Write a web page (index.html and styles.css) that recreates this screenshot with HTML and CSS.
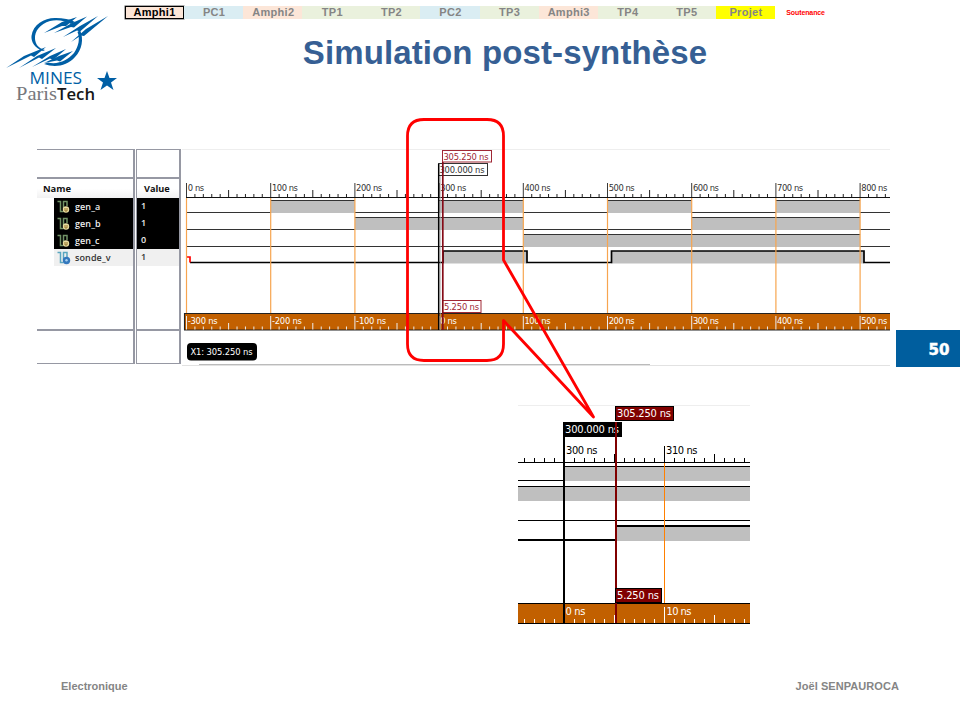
FILE: index.html
```
<!DOCTYPE html>
<html lang="fr">
<head>
<meta charset="utf-8">
<title>Simulation post-synthèse</title>
<link rel="stylesheet" href="styles.css">
</head>
<body>
<div class="slide">
<header class="header">
  <svg class="logo" width="125" height="110" viewBox="0 0 125 110">
    <g fill="#005fa5">
      <path d="M43 51C34 48 31 41 31.500 36C33 24 45 17.500 56 18C63 18 70 19 75 22L71 24C65 20.500 57 19.500 50 21C40 24 34.500 31 35 39C35.500 44 38 48 45 50Z"/>
      <path d="M80 30C84 39 82 50 75 57C67 66 55 68 44 64L48 62.500C58 65 68 60 74 53C79 46 80 38 77.500 32Z"/>
      <path d="M44 33L62 22L77 17L66 26L62 26Z"/>
      <path d="M54 33L72 23L87 16.500L74 27.500L71 27Z"/>
      <path d="M63 37L80 26L98 16L80 31.500L77 30.500Z"/>
      <path d="M71 42L86 29L108 16L84 36L81 35.500Z"/>
      <path d="M6 68L24 56L46 47L34 57L31 55.500Z"/>
      <path d="M19 68L37 56L56 48L42 59L39 57.500Z"/>
      <path d="M32 67L50 56L66 49L53 60L50 58.500Z"/>
      <path d="M44 63L59 56L73 51L60 61.500L57 60.500Z"/>
      <path d="M107 71L109.500 78L117 78L111 82.500L113.500 90L107 85.500L100.500 90L103 82.500L97 78L104.500 78Z"/>
    </g>
    <text class="logo-mines" x="29.500" y="83.500" textLength="52.500" lengthAdjust="spacingAndGlyphs">MINES</text>
    <text class="logo-paris" x="16" y="100" textLength="41" lengthAdjust="spacingAndGlyphs">Paris</text>
    <text class="logo-tech" x="57" y="100" textLength="38" lengthAdjust="spacingAndGlyphs">Tech</text>
  </svg>
  <div class="heading">
    <nav class="nav">
      <span class="tab amphi current">Amphi1</span><span class="tab pc">PC1</span><span class="tab amphi">Amphi2</span><span class="tab tp">TP1</span><span class="tab tp">TP2</span><span class="tab pc">PC2</span><span class="tab tp">TP3</span><span class="tab amphi">Amphi3</span><span class="tab tp">TP4</span><span class="tab tp">TP5</span><span class="tab projet">Projet</span><span class="tab soutenance">Soutenance</span>
    </nav>
    <h1 class="title">Simulation post-synthèse</h1>
  </div>
</header>

<main>
  <section class="simulation">
    <div class="panel names">
      <div class="blank"></div>
      <div class="head">Name</div>
      <div class="signal selected"><svg class="sig-icon" width="14" height="14"><use href="#sig"/><circle cx="9" cy="9.500" r="3.200" fill="#e8dca0"/><path d="M8 8v3h2V8" fill="none" stroke="#94742c"/></svg><span>gen_a</span></div>
      <div class="signal selected"><svg class="sig-icon" width="14" height="14"><use href="#sig"/><circle cx="9" cy="9.500" r="3.200" fill="#e8dca0"/><path d="M8 8v3h2V8" fill="none" stroke="#94742c"/></svg><span>gen_b</span></div>
      <div class="signal selected"><svg class="sig-icon" width="14" height="14"><use href="#sig"/><circle cx="9" cy="9.500" r="3.200" fill="#e8dca0"/><path d="M8 8v3h2V8" fill="none" stroke="#94742c"/></svg><span>gen_c</span></div>
      <div class="signal probe"><svg class="sig-icon" width="14" height="14"><use href="#sig"/><circle cx="9.500" cy="9.500" r="3.700" fill="#3478bd"/><circle cx="9.500" cy="9.200" r="1.200" fill="#a9d0ee"/></svg><span>sonde_v</span></div>
      <div class="rest"></div>
      <div class="bottom"></div>
    </div>
    <div class="panel values">
      <div class="blank"></div>
      <div class="head">Value</div>
      <div class="value selected">1</div>
      <div class="value selected">1</div>
      <div class="value selected">0</div>
      <div class="value">1</div>
      <div class="rest"></div>
      <div class="bottom"></div>
    </div>
    <svg class="waves" id="waves" width="708" height="218" viewBox="182 149 708 218">
      <defs><path id="sig" d="M0.500 1.500H3.500V11.500H6.500M6.500 9V1.500H10V6" fill="none" stroke="currentColor" stroke-width="1.500"/></defs>
    </svg>
    <div class="page-number">50</div>
  </section>
  <svg class="detail" id="detail" width="232" height="220" viewBox="518 405 232 220"></svg>
</main>

<footer class="footer"><span class="course">Electronique</span><span class="author">Joël SENPAUROCA</span></footer>
<svg class="callout" width="960" height="720" viewBox="0 0 960 720"><path d="M424 119.500H487Q503.500 119.500 503.500 136V260L593.500 417L503.500 320.500V344Q503.500 360.500 487 360.500H424Q407.500 360.500 407.500 344V136Q407.500 119.500 424 119.500Z"/></svg>
</div>
<script src="waves.js"></script>
</body>
</html>
```

FILE: styles.css
```
* { box-sizing: border-box; }
body { margin: 0; background: #fff; font-family: "Liberation Sans", sans-serif; }
.slide { position: relative; width: 960px; height: 720px; overflow: hidden; display: flex; flex-direction: column; }
.header { display: flex; height: 149px; flex: none; }
.logo { flex: none; }
.logo-mines { font: 17px "Open Sans", sans-serif; fill: #005fa5; }
.logo-paris { font: 18px "Liberation Serif", serif; fill: #77787c; }
.logo-tech { font: 600 17px "Open Sans", sans-serif; fill: #171717; }
.heading { flex: 1; padding-top: 6px; }
.nav { display: flex; height: 13px; }
.tab { width: 59.1px; height: 13px; font-size: 11px; line-height: 13px; font-weight: bold; letter-spacing: .3px; text-align: center; color: #858585; }
.tab + .tab { padding-left: 1px; }
.amphi { background: #fce6d8; }
.pc { background: #daedf3; }
.tp { background: #eaf1dd; }
.projet { background: #ff0; }
.current { color: #000; border: 1px solid #000; box-shadow: 0 0 0 .5px #555; line-height: 11px; }
.tab.soutenance { color: #f00; font-size: 7px; letter-spacing: -.1px; padding-left: 2px; }
.title { margin: 12px 0 0; width: 760px; text-align: center; font: bold 33px/44px "Liberation Sans", sans-serif; letter-spacing: .12px; color: #365f94; }

.simulation { display: flex; height: 218px; }
.panel { height: 215px; border: 1px solid #9698a3; border-width: 1px 2px 1px 0; font: 600 9px "Open Sans", sans-serif; color: #333; }
.names { width: 98px; margin-left: 37px; margin-right: 1px; }
.values { width: 45px; border-left-width: 1px; margin-right: 1px; }
.blank { height: 29px; border-bottom: 2px solid #9698a3; }
.head { height: 19px; line-height: 20px; padding-left: 6px; font-size: 9.4px; font-weight: bold; color: #111; background: linear-gradient(#fff 50%, #f1f1f2); }
.values .head { padding-left: 7px; font-size: 9.2px; }
.signal { display: flex; align-items: center; height: 17px; margin-left: 17px; padding-left: 3px; gap: 4px; letter-spacing: .1px; }
.signal span { margin-top: -1px; }
.value { height: 17px; line-height: 16px; padding-left: 4px; background: #f0f0f0; }
.signal.selected, .value.selected { background: #000; color: #eee; }
.probe { background: #f0f0f0; }
.sig-icon { flex: none; color: #719266; }
.probe .sig-icon { color: #5aa6bf; }
.rest { height: 65px; border-bottom: 2px solid #9698a3; }
.waves, .detail { display: block; flex: none; font-family: "DejaVu Sans Condensed", "DejaVu Sans", sans-serif; }
.waves { font-size: 9.3px; }
.waves text { fill: #333; }
.detail { font-size: 11px; margin: 38px 0 0 518px; }
.waves text.light, .detail .light { fill: #fff; }
.waves text.crimson { fill: #a02835; }
.page-number { margin: 181px 0 0 6px; width: 64px; height: 37px; padding-left: 32.5px; font: bold 15px/40px "DejaVu Sans", sans-serif; -webkit-text-stroke: .5px #fff; color: #fff; background: #005e9e; }
.footer { display: flex; justify-content: space-between; margin-top: 54px; padding: 0 61px; font-size: 11px; line-height: 14px; font-weight: bold; color: #858585; }
.author { letter-spacing: .07px; }
.callout { position: absolute; left: 0; top: 0; fill: none; stroke: #f00; stroke-width: 2.8; stroke-linejoin: round; pointer-events: none; }
```

FILE: waves.js
```
const rect = (x, y, w, h, fill, extra = "") => `<rect x="${x}" y="${y}" width="${w}" height="${h}" fill="${fill}" ${extra}/>`;
const path = (d, color, width = 1) => `<path d="${d}" fill="none" stroke="${color}" stroke-width="${width}"/>`;
const text = (x, y, s, len, cls = "") => `<text x="${x}" y="${y}" textLength="${len}" class="${cls}">${s}</text>`;

function drawWaves() {
  const x = t => 186.5 + t * 0.842;
  let s = rect(182, 149, 708, 1, "#eee") + rect(182, 365, 708, 1, "#e2e2e2") + rect(199, 364, 451, 1, "#bbb");
  const tracks = [
    [200.5, [[100, 200], [300, 400], [500, 600], [700, 800]]],
    [217.5, [[200, 400], [600, 800]]],
    [234.5, [[400, 800]]]
  ];
  for (const [y, highs] of tracks) {
    let last = 0;
    for (const [a, b] of highs) {
      s += rect(x(a), y, x(b) - x(a), 12.5, "#bfbfbf");
      s += path(`M${x(last)} ${y + 12}H${x(a)}M${x(a)} ${y}H${x(b)}`, "#333");
      last = b;
    }
    s += path(`M${x(last)} ${y + 12}H890`, "#333");
  }
  s += rect(443, 251, 84, 12.5, "#bfbfbf") + rect(611, 251, 253, 12.5, "#bfbfbf");
  s += path("M190 262.5H443V251H527V262.5H611.5V251H864V262.5H890", "#000", 1.7);
  s += path("M186 257H190V262.5", "#f00", 1.7);
  s += rect(184, 313, 706, 17, "#c26000") + path("M184 313.5H890M184 330H890M184.500 313V330", "#222", 1.1);
  s += path("M186 197.5H890", "#111", 1.2);
  for (let i = 0; i <= 83; i++) {
    const px = x(i * 10), major = i % 10 === 0, mid = i % 5 === 0;
    s += path(`M${px} ${major ? 183 : mid ? 190 : 194}V197`, "#222", major ? .9 : 1);
    s += path(`M${px} ${major ? 316 : mid ? 323 : 326.5}V329.5`, "#eee");
  }
  for (let i = 0; i <= 8; i++) {
    if (i !== 3) s += path(`M${x(i * 100)} 198V313`, "#f7a54f", 1.2);
    const n = i * 100, m = n - 300;
    s += text(x(n) + 1.2, 190.5, n + " ns", n ? 26 : 16.5);
    s += text(x(n) + 1.2, 323.5, m + " ns", m < 0 ? 30 : m ? 26 : 16.5, "light");
  }
  s += rect(438.5, 163.5, 49, 12, "#fff", 'stroke="#333"') + text(439.5, 173, "300.000 ns", 45);
  s += rect(442.5, 150.5, 49, 11.5, "#fff", 'stroke="#a02835"') + text(443.5, 159.5, "305.250 ns", 45, "crimson");
  s += rect(442.5, 300.5, 38.5, 12, "#fff", 'stroke="#a02835"') + text(444, 310, "5.250 ns", 35, "crimson");
  s += path("M438.700 164V330", "#000", 1.5) + path("M440.300 176V330", "#aaa", .7);
  s += path("M442.800 162V330", "#850c18", 1.7);
  s += rect(187, 343, 70, 17.5, "#000", 'rx="4"') + text(190.5, 355, "X1: 305.250 ns", 62, "light");
  document.getElementById("waves").insertAdjacentHTML("beforeend", s);
}

function drawDetail() {
  let s = rect(518, 405, 232, 1, "#eee");
  s += rect(565, 467, 185, 14, "#bfbfbf") + rect(518, 487, 232, 14, "#bfbfbf") + rect(616, 527, 134, 14, "#bfbfbf");
  s += path("M518 462.5H750M518 480.5H564M564 466.5H750M518 486.5H750M518 520.5H750", "#000");
  s += path("M518 540H616M616 526H750", "#000", 2);
  s += rect(518, 603, 232, 21, "#c26000") + path("M518 603.5H750M518 623.5H750", "#000");
  for (let i = -4; i <= 18; i++) {
    const px = 564.5 + i * 10, major = i === 0 || i === 10, mid = i === 5 || i === 15;
    s += path(`M${px} ${major ? 446 : mid ? 454 : 458}V462`, "#000");
    s += path(`M${px} ${major ? 607 : mid ? 615 : 619}V623`, "#fff");
  }
  s += path("M664.5 463V603", "#ff8000");
  s += text(566, 454, "300 ns", 31.5) + text(666, 454, "310 ns", 31.5);
  s += text(565.5, 615, "0 ns", 20, "light") + text(666.5, 615, "10 ns", 25, "light");
  s += rect(563, 422, 59, 15, "#000") + text(565, 433, "300.000 ns", 54, "light");
  s += path("M564 422V623", "#000", 2);
  s += rect(615.5, 406.5, 58, 14, "#800000", 'stroke="#000"') + text(617, 417, "305.250 ns", 54, "light");
  s += path("M616 422V623", "#800000", 2);
  s += rect(615.5, 588.5, 46, 14, "#800000", 'stroke="#000"') + text(617, 599, "5.250 ns", 42, "light");
  document.getElementById("detail").innerHTML = s;
}

drawWaves();
drawDetail();
```
